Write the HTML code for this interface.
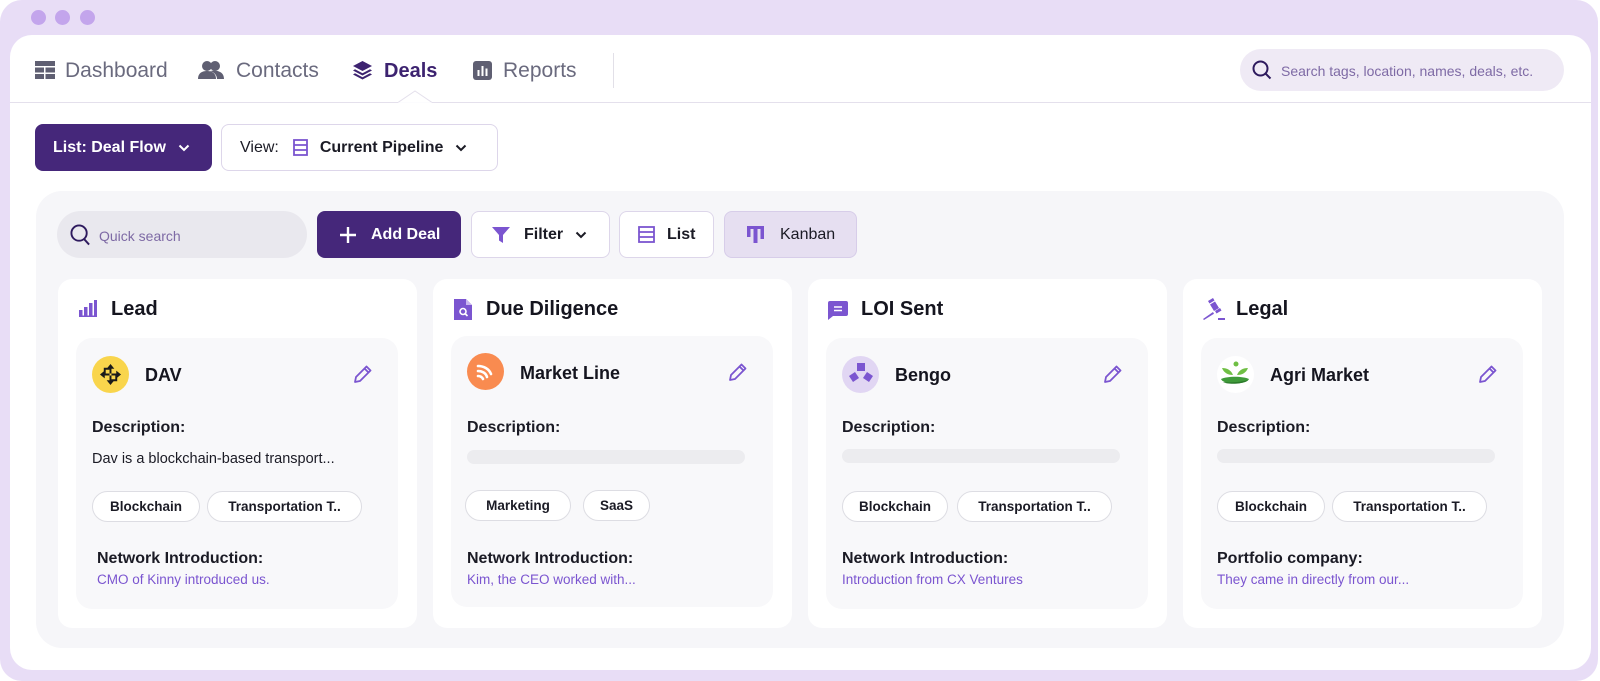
<!DOCTYPE html>
<html><head><meta charset="utf-8"><style>
*{box-sizing:border-box;margin:0;padding:0}
body{width:1600px;height:681px;background:#fff;font-family:"Liberation Sans",sans-serif;position:relative;overflow:hidden;color:#15151f}
.abs{position:absolute}
.frame{left:0;top:0;width:1598px;height:681px;background:#e8ddf6;border-radius:22px}
.dot{width:15px;height:15px;border-radius:50%;background:#c3a5ec;top:10px}
.panel{left:10px;top:35px;width:1581px;height:635px;background:#fff;border-radius:22px}
.nav{font-size:21px;color:#6a6a7e;top:59px;line-height:24px}
.btn{border-radius:8px;display:flex;align-items:center;font-size:16px;font-weight:bold}
.col{top:279px;width:359px;height:349px;background:#fff;border-radius:14px}
.col h3{position:absolute;left:53px;top:19px;font-size:20px;font-weight:bold;color:#15151f}
.card{position:absolute;left:18px;top:59px;width:322px;height:271px;background:#f8f8fa;border-radius:16px}
.logo{position:absolute;left:16px;top:18px;width:37px;height:37px;border-radius:50%}
.name{position:absolute;left:69px;top:27px;font-size:18px;font-weight:bold}
.pen{position:absolute;left:277px;top:26px}
.lbl{position:absolute;left:16px;font-size:16px;font-weight:bold;color:#1b1b25}
.desc{position:absolute;left:16px;top:113px;font-size:14.5px;color:#1b1b25}
.bar{position:absolute;left:16px;top:111px;width:278px;height:14px;border-radius:7px;background:#ececef}
.tag{position:absolute;top:153px;height:31px;border:1px solid #dddde3;border-radius:16px;background:#fff;font-size:13.5px;font-weight:bold;color:#1b1b25;display:flex;align-items:center;justify-content:center}
.link{position:absolute;left:21px;top:234px;font-size:13.5px;color:#7b55d0}
</style></head><body>
<div class="abs frame"></div>
<div class="abs dot" style="left:31px"></div>
<div class="abs dot" style="left:55px"></div>
<div class="abs dot" style="left:80px"></div>
<div class="abs panel"></div>

<!-- nav -->
<svg class="abs" style="left:35px;top:61px" width="20" height="18" viewBox="0 0 20 18"><g fill="#5f5f72"><rect x="0" y="0" width="20" height="5"/><rect x="0" y="6.5" width="9" height="5"/><rect x="10.5" y="6.5" width="9.5" height="5"/><rect x="0" y="13" width="9" height="5"/><rect x="10.5" y="13" width="9.5" height="5"/></g></svg>
<div class="abs nav" style="left:65px">Dashboard</div>
<svg class="abs" style="left:198px;top:61px" width="26" height="18" viewBox="0 0 26 18"><g fill="#5f5f72"><circle cx="9" cy="5" r="5"/><path d="M0 18c0-6 4-8 9-8s9 2 9 8z"/><circle cx="17" cy="5" r="5"/><path d="M12 10c6-1 14 0 14 8h-7c0-4-3-7-7-8z"/></g></svg>
<div class="abs nav" style="left:236px">Contacts</div>
<svg class="abs" style="left:353px;top:61px" width="19" height="19" viewBox="0 0 19 19"><g fill="#3d2370"><path d="M9.5 0L19 5 9.5 10 0 5z"/><path d="M2 8.2l7.5 4 7.5-4 2 1.3-9.5 5-9.5-5z"/><path d="M2 12.2l7.5 4 7.5-4 2 1.3-9.5 5-9.5-5z"/></g></svg>
<div class="abs nav" style="left:384px;color:#3d2370;font-weight:bold;font-size:20px">Deals</div>
<svg class="abs" style="left:473px;top:61px" width="19" height="19" viewBox="0 0 19 19"><rect width="19" height="19" rx="3" fill="#5f5f72"/><g fill="#fff"><rect x="4.5" y="9" width="2" height="6"/><rect x="8.5" y="5" width="2" height="10"/><rect x="12.5" y="7.5" width="2" height="7.5"/></g></svg>
<div class="abs nav" style="left:503px">Reports</div>
<div class="abs" style="left:613px;top:53px;width:1px;height:35px;background:#e2e0e8"></div>
<div class="abs" style="left:10px;top:102px;width:1581px;height:1px;background:#e4e0ec"></div>
<svg class="abs" style="left:398px;top:90px" width="34" height="14" viewBox="0 0 34 14"><path d="M0 12.5L17 1 34 12.5" fill="#fff" stroke="#e4e0ec"/><rect x="0" y="12.6" width="34" height="2" fill="#fff"/></svg>

<div class="abs" style="left:1240px;top:49px;width:324px;height:42px;border-radius:21px;background:#efeaf5"></div>
<svg class="abs" style="left:1252px;top:60px" width="20" height="20" viewBox="0 0 20 20"><circle cx="8.5" cy="8.5" r="7" fill="none" stroke="#2e1a5e" stroke-width="2"/><path d="M13.5 13.5L18.5 18.5" stroke="#2e1a5e" stroke-width="2"/></svg>
<div class="abs" style="left:1281px;top:63px;font-size:14px;color:#7e6aa5">Search tags, location, names, deals, etc.</div>

<!-- top buttons -->
<div class="abs btn" style="left:35px;top:124px;width:177px;height:47px;background:#45277a;color:#fff;padding-left:18px">List: Deal Flow
<svg style="margin-left:12px" width="12" height="8" viewBox="0 0 12 8"><path d="M1.5 1.5L6 6l4.5-4.5" fill="none" stroke="#fff" stroke-width="2"/></svg></div>
<div class="abs btn" style="left:221px;top:124px;width:277px;height:47px;background:#fff;border:1.5px solid #ddd6ea;color:#1b1b25;padding-left:18px;font-weight:normal">View:
<svg style="margin:0 12px 0 14px" width="15" height="17" viewBox="0 0 15 17"><rect x="1" y="1" width="13" height="15" fill="none" stroke="#7b55d0" stroke-width="1.8"/><path d="M1 6h13M1 11h13" stroke="#7b55d0" stroke-width="1.8"/></svg><b>Current Pipeline</b>
<svg style="margin-left:12px" width="12" height="8" viewBox="0 0 12 8"><path d="M1.5 1.5L6 6l4.5-4.5" fill="none" stroke="#1b1b25" stroke-width="2"/></svg></div>

<!-- kanban area -->
<div class="abs" style="left:36px;top:191px;width:1528px;height:457px;background:#f6f6f9;border-radius:26px"></div>
<div class="abs" style="left:57px;top:211px;width:250px;height:47px;border-radius:24px;background:#e9e8ee"></div>
<svg class="abs" style="left:70px;top:224px" width="21" height="22" viewBox="0 0 22 23"><circle cx="9.5" cy="9.5" r="8" fill="none" stroke="#2e1a5e" stroke-width="2"/><path d="M15 16l5 5.5" stroke="#2e1a5e" stroke-width="2"/></svg>
<div class="abs" style="left:99px;top:228px;font-size:14px;color:#7e6aa5">Quick search</div>
<div class="abs btn" style="left:317px;top:211px;width:144px;height:47px;background:#45277a;color:#fff;padding-left:22px"><svg width="18" height="18" viewBox="0 0 18 18"><path d="M9 1v16M1 9h16" stroke="#fff" stroke-width="2.4"/></svg><span style="margin-left:14px">Add Deal</span></div>
<div class="abs btn" style="left:471px;top:211px;width:139px;height:47px;background:#fff;border:1.5px solid #ddd6ea;padding-left:20px;color:#1b1b25"><svg width="18" height="18" viewBox="0 0 18 18"><path d="M0 1h18l-7 8v8l-4-2.5V9z" fill="#7b55d0"/></svg><span style="margin-left:14px">Filter</span><svg style="margin-left:12px" width="12" height="8" viewBox="0 0 12 8"><path d="M1.5 1.5L6 6l4.5-4.5" fill="none" stroke="#1b1b25" stroke-width="2"/></svg></div>
<div class="abs btn" style="left:619px;top:211px;width:95px;height:47px;background:#fff;border:1.5px solid #ddd6ea;padding-left:18px;color:#1b1b25"><svg width="17" height="17" viewBox="0 0 17 17"><rect x="1" y="1" width="15" height="15" fill="none" stroke="#7b55d0" stroke-width="1.8"/><path d="M1 6h15M1 11h15" stroke="#7b55d0" stroke-width="1.8"/></svg><span style="margin-left:12px">List</span></div>
<div class="abs btn" style="left:724px;top:211px;width:133px;height:47px;background:#e6dff1;border:1.5px solid #d7cde9;padding-left:22px;color:#1b1b25"><svg width="17" height="17" viewBox="0 0 17 17"><g fill="#7b55d0"><rect x="0" y="0" width="17" height="3"/><rect x="0" y="0" width="3.5" height="11"/><rect x="6.5" y="0" width="4" height="17"/><rect x="13.5" y="0" width="3.5" height="13"/></g></svg><span style="margin-left:16px;font-weight:normal">Kanban</span></div>

<!-- Column 1 -->
<div class="abs col" style="left:58px">
<svg class="abs" style="left:21px;top:21px" width="18" height="17" viewBox="0 0 18 17"><g fill="#7b55d0"><rect x="0" y="10" width="3.5" height="7"/><rect x="5" y="7" width="3.5" height="10"/><rect x="10" y="3" width="3.5" height="14"/><rect x="15" y="0" width="3" height="17"/><rect x="0" y="15.5" width="18" height="1.5"/></g></svg>
<h3>Lead</h3>
<div class="card">
<div class="logo" style="background:#f9d54c"></div>
<svg class="abs" style="left:23px;top:25px" width="23" height="23" viewBox="0 0 24 24"><g fill="#1a1a1a"><path d="M12 1l4 5h-3v5h-2V6H8z"/><path d="M12 23l-4-5h3v-5h2v5h3z"/><path d="M1 12l5-4v3h5v2H6v3z"/><path d="M23 12l-5 4v-3h-5v-2h5V8z"/><path d="M5 5h6v2H7v4H5z"/><path d="M19 19h-6v-2h4v-4h2z"/></g></svg>
<div class="name">DAV</div>
<svg class="pen" width="20" height="20" viewBox="0 0 20 20"><path d="M2 18l1-5L13.5 2.5l4 4L7 17z M11.5 4.5l4 4" fill="none" stroke="#7b55d0" stroke-width="1.8" stroke-linejoin="round"/></svg>
<div class="lbl" style="top:81px">Description:</div>
<div class="desc">Dav is a blockchain-based transport...</div>
<div class="tag" style="left:16px;width:108px">Blockchain</div>
<div class="tag" style="left:131px;width:155px">Transportation T..</div>
<div class="lbl" style="top:212px;left:21px">Network Introduction:</div>
<div class="link">CMO of Kinny introduced us.</div>
</div></div>

<!-- Column 2 -->
<div class="abs col" style="left:433px">
<svg class="abs" style="left:21px;top:20px" width="18" height="21" viewBox="0 0 18 21"><path d="M0 0h12l6 6v15H0z" fill="#7b55d0"/><path d="M12 0v6h6" fill="#c9b6ef"/><circle cx="9" cy="12.5" r="3" fill="none" stroke="#fff" stroke-width="1.6"/><path d="M11 14.5l2.5 2.5" stroke="#fff" stroke-width="1.6"/></svg>
<h3>Due Diligence</h3>
<div class="card" style="top:57px">
<div class="logo" style="background:#f98b50;top:17px"></div>
<svg class="abs" style="left:24px;top:25px" width="22" height="22" viewBox="0 0 22 22"><g fill="none" stroke="#fff" stroke-width="2.6" stroke-linecap="round"><path d="M3 5c6 0 11 3 13 8"/><path d="M3 10c4 0 8 2 9 6"/><path d="M3 15c2 0 4 1 5 3"/></g></svg>
<div class="name" style="top:27px">Market Line</div>
<svg class="pen" width="20" height="20" viewBox="0 0 20 20"><path d="M2 18l1-5L13.5 2.5l4 4L7 17z M11.5 4.5l4 4" fill="none" stroke="#7b55d0" stroke-width="1.8" stroke-linejoin="round"/></svg>
<div class="lbl" style="top:83px">Description:</div>
<div class="bar" style="top:114px"></div>
<div class="tag" style="left:14px;width:106px;top:154px">Marketing</div>
<div class="tag" style="left:132px;width:67px;top:154px">SaaS</div>
<div class="lbl" style="top:214px">Network Introduction:</div>
<div class="link" style="left:16px;top:236px">Kim, the CEO worked with...</div>
</div></div>

<!-- Column 3 -->
<div class="abs col" style="left:808px">
<svg class="abs" style="left:20px;top:22px" width="20" height="19" viewBox="0 0 20 19"><path d="M0 2a2 2 0 012-2h16a2 2 0 012 2v11a2 2 0 01-2 2H5l-5 4z" fill="#7b55d0"/><path d="M6 6h8M6 9.5h8" stroke="#fff" stroke-width="1.6"/></svg>
<h3>LOI Sent</h3>
<div class="card">
<div class="logo" style="background:#e1d6f3"></div>
<svg class="abs" style="left:23px;top:25px" width="24" height="22" viewBox="0 0 24 22"><g fill="#7b55d0"><rect x="8" y="0" width="8" height="8"/><path d="M0 13l6-4 4 6-6 4z"/><path d="M24 13l-6-4-4 6 6 4z"/></g></svg>
<div class="name">Bengo</div>
<svg class="pen" width="20" height="20" viewBox="0 0 20 20"><path d="M2 18l1-5L13.5 2.5l4 4L7 17z M11.5 4.5l4 4" fill="none" stroke="#7b55d0" stroke-width="1.8" stroke-linejoin="round"/></svg>
<div class="lbl" style="top:81px">Description:</div>
<div class="bar"></div>
<div class="tag" style="left:16px;width:106px">Blockchain</div>
<div class="tag" style="left:131px;width:155px">Transportation T..</div>
<div class="lbl" style="top:212px">Network Introduction:</div>
<div class="link" style="left:16px">Introduction from CX Ventures</div>
</div></div>

<!-- Column 4 -->
<div class="abs col" style="left:1183px">
<svg class="abs" style="left:20px;top:19px" width="22" height="22" viewBox="0 0 22 22"><g fill="#7b55d0"><path d="M5 3l5-3 1.5 2.5-5 3z"/><path d="M7 6.5l5-3 4 6.5-5 3z"/><path d="M12 13l5-3 1.5 2.5-5 3z"/><path d="M0 21l10-7 1 1.7L1 22z"/><rect x="15" y="20" width="7" height="2"/></g></svg>
<h3>Legal</h3>
<div class="card">
<div class="logo" style="background:#fff"></div>
<svg class="abs" style="left:17px;top:22px" width="34" height="30" viewBox="0 0 34 30"><circle cx="18" cy="4" r="2.5" fill="#6fbf44"/><path d="M4 8c5 0 9 2 11 7-5 0-9-2-11-7z" fill="#6fbf44"/><path d="M30 8c-5 0-9 2-11 7 5 0 9-2 11-7z" fill="#6fbf44"/><path d="M3 19c6-3 22-3 28 0-2 6-26 6-28 0z" fill="#3f9a3a"/><path d="M5 22c8 1 18 0 25-2-3 4-20 5-25 2z" fill="#2c7a2b"/></svg>
<div class="name">Agri Market</div>
<svg class="pen" width="20" height="20" viewBox="0 0 20 20"><path d="M2 18l1-5L13.5 2.5l4 4L7 17z M11.5 4.5l4 4" fill="none" stroke="#7b55d0" stroke-width="1.8" stroke-linejoin="round"/></svg>
<div class="lbl" style="top:81px">Description:</div>
<div class="bar"></div>
<div class="tag" style="left:16px;width:108px">Blockchain</div>
<div class="tag" style="left:131px;width:155px">Transportation T..</div>
<div class="lbl" style="top:212px">Portfolio company:</div>
<div class="link" style="left:16px">They came in directly from our...</div>
</div></div>
</body></html>
